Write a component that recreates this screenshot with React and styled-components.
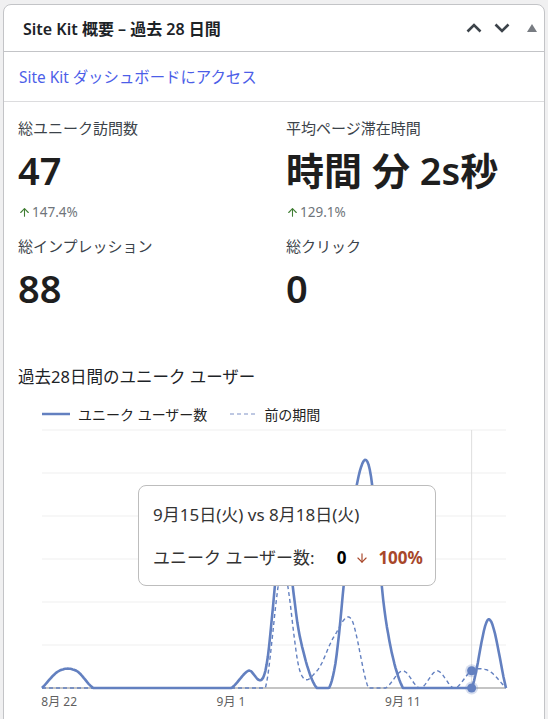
import React from "react";
import styled, { createGlobalStyle } from "styled-components";
import { ArrowUp, ArrowDown } from "lucide-react";

const GlobalStyle = createGlobalStyle`
  html, body {
    margin: 0;
    padding: 0;
    background: #f0f0f1;
  }
  body {
    font-family: "Noto Sans", "Noto Sans CJK JP", sans-serif;
    color: #1d2327;
  }
  * {
    box-sizing: border-box;
  }
`;

// chart geometry, in page pixels
const X0 = 42;
const STEP = 464 / 27;
const BASE = 688;
const TOP = 430;
const UNIT = (BASE - TOP) / 15;

const current = [0, 1, 1, 0, 0, 0, 0, 0, 0, 0, 0, 0, 1, 1, 9, 3, 0, 1, 10, 13, 4, 0, 0, 0, 0, 0, 4, 0];
const previous = [0, 0, 0, 0, 0, 0, 0, 0, 0, 0, 0, 0, 0, 0, 7, 1, 1, 3, 4, 0, 0, 1, 0, 1, 0, 1, 1, 0];

const xAt = (i) => X0 + i * STEP;
const yAt = (v) => BASE - v * UNIT;

function curvePath(values) {
  const n = values.length;
  const tan = values.map((v, i) => {
    const a = values[Math.max(0, i - 1)];
    const b = values[Math.min(n - 1, i + 1)];
    return (b - a) / (i === 0 || i === n - 1 ? 1 : 2);
  });
  const pts = [];
  for (let i = 0; i < n - 1; i++) {
    for (let s = 0; s < 14; s++) {
      const t = s / 14;
      const t2 = t * t;
      const t3 = t2 * t;
      const v =
        (2 * t3 - 3 * t2 + 1) * values[i] +
        (t3 - 2 * t2 + t) * tan[i] +
        (-2 * t3 + 3 * t2) * values[i + 1] +
        (t3 - t2) * tan[i + 1];
      pts.push([X0 + (i + t) * STEP, yAt(Math.max(0, v))]);
    }
  }
  pts.push([xAt(n - 1), yAt(values[n - 1])]);
  return "M" + pts.map((p) => p[0].toFixed(1) + "," + p[1].toFixed(1)).join("L");
}

const Page = styled.div`
  padding: 4px 3px 0;
`;

const Card = styled.section`
  background: #fff;
  border: 1px solid #c3c4c7;
  border-radius: 8px 8px 0 0;
  padding-bottom: 40px;
`;

const Header = styled.header`
  height: 47px;
  display: flex;
  align-items: center;
  padding: 0 7px 0 19px;
  border-bottom: 1px solid #c3c4c7;
`;

const Title = styled.h2`
  flex: 1;
  margin: 0;
  font-size: 16px;
  font-weight: 600;
  color: #1d2327;
`;

const Handle = styled.button`
  display: flex;
  align-items: center;
  justify-content: center;
  margin-left: ${({ $space }) => $space}px;
  padding: 0;
  border: 0;
  background: none;
  cursor: pointer;
  svg {
    display: block;
  }
`;

const LinkRow = styled.div`
  height: 50px;
  display: flex;
  align-items: center;
  padding-left: 15px;
  border-bottom: 1px solid #dcdcde;
`;

const DashLink = styled.a`
  font-size: 15.4px;
  color: #4c5ee8;
  text-decoration: none;
`;

const Metrics = styled.div`
  display: grid;
  grid-template-columns: 268px 1fr;
  row-gap: 15px;
  padding: 16px 14px 0;
`;

const Metric = styled.div`
  display: flex;
  flex-direction: column;
`;

const MetricLabel = styled.div`
  height: 20px;
  line-height: 20px;
  font-size: 15px;
  color: #3c434a;
`;

const MetricValue = styled.div`
  margin-top: 10px;
  height: 44px;
  line-height: 44px;
  font-size: 38px;
  font-weight: 600;
  color: #1e1e1e;
  white-space: nowrap;
`;

const Change = styled.div`
  margin-top: 11px;
  height: 18px;
  display: flex;
  align-items: center;
  gap: 1px;
  font-size: 13.5px;
  color: #6f757b;
  svg {
    color: #3f7d32;
  }
`;

const ChartSection = styled.div`
  margin-top: 55px;
`;

const ChartTitle = styled.h3`
  margin: 0;
  padding-left: 14px;
  height: 24px;
  line-height: 24px;
  font-size: 16.5px;
  font-weight: 400;
  color: #1d2327;
`;

const Legend = styled.div`
  margin-top: 15px;
  height: 20px;
  display: flex;
  align-items: center;
  padding-left: 38px;
  font-size: 14px;
  color: #222;
`;

const LegendItem = styled.div`
  display: flex;
  align-items: center;
  gap: 8px;
  & + & {
    margin-left: 23px;
  }
  svg {
    display: block;
  }
`;

const ChartWrap = styled.div`
  position: relative;
  height: 300px;
  svg {
    display: block;
  }
`;

const Tooltip = styled.div`
  position: absolute;
  left: 134px;
  top: 61px;
  width: 298px;
  height: 101px;
  padding: 17px 14px 0;
  background: #fff;
  border: 1px solid #bdbdbd;
  border-radius: 8px;
  font-size: 17px;
  color: #333;
`;

const TipLine = styled.div`
  height: 24px;
  line-height: 24px;
  display: flex;
  align-items: center;
  white-space: nowrap;
  & + & {
    margin-top: 19px;
  }
`;

const TipValue = styled.b`
  margin-left: 22px;
  color: #000;
`;

const TipDelta = styled.b`
  display: flex;
  align-items: center;
  gap: 9px;
  margin-left: 9px;
  color: #a8472a;
`;

const ChevronUp = () => (
  <svg width="16" height="10" viewBox="0 0 16 10">
    <polyline points="1.5,8.5 8,2 14.5,8.5" fill="none" stroke="#3c434a" strokeWidth="2.6" />
  </svg>
);

const ChevronDown = () => (
  <svg width="16" height="10" viewBox="0 0 16 10">
    <polyline points="1.5,1.5 8,8 14.5,1.5" fill="none" stroke="#3c434a" strokeWidth="2.6" />
  </svg>
);

const Triangle = () => (
  <svg width="10" height="8" viewBox="0 0 10 8">
    <polygon points="5,0 10,8 0,8" fill="#787c82" />
  </svg>
);

const LINE = "#6380c0";

function UsersChart() {
  const grid = [0, 1, 2, 3, 4, 5].map((k) => TOP + k * 43);
  const labels = [
    { i: 1, text: "8月 22" },
    { i: 11, text: "9月 1" },
    { i: 21, text: "9月 11" },
  ];
  const hover = 25;
  return (
    <ChartWrap>
      <svg width="540" height="300" viewBox="4 424 540 300">
        {grid.map((y) => (
          <line key={y} x1={X0} x2={X0 + 464} y1={y} y2={y} stroke="#efefef" strokeWidth="1" />
        ))}
        <line x1={xAt(hover)} x2={xAt(hover)} y1={TOP} y2={BASE} stroke="#dedede" strokeWidth="1" />
        <line x1={X0} x2={X0 + 464} y1={BASE} y2={BASE} stroke="#8a8a8a" strokeWidth="1.2" />
        <path d={curvePath(current)} fill="none" stroke={LINE} strokeWidth="2.6" strokeLinejoin="round" />
        <path d={curvePath(previous)} fill="none" stroke={LINE} strokeWidth="1.4" strokeDasharray="4 3" />
        {[previous[hover], current[hover]].map((v, k) => (
          <g key={k}>
            <circle cx={xAt(hover)} cy={yAt(v)} r="6.5" fill={LINE} opacity="0.25" />
            <circle cx={xAt(hover)} cy={yAt(v)} r="4.5" fill={LINE} />
          </g>
        ))}
        {labels.map((l) => (
          <text key={l.i} x={xAt(l.i)} y={706} textAnchor="middle" fontSize="12" fill="#5f5f5f">
            {l.text}
          </text>
        ))}
      </svg>
      <Tooltip>
        <TipLine>9月15日(火) vs 8月18日(火)</TipLine>
        <TipLine>
          ユニーク ユーザー数:
          <TipValue>0</TipValue>
          <TipDelta>
            <ArrowDown size={14} strokeWidth={2} />
            100%
          </TipDelta>
        </TipLine>
      </Tooltip>
    </ChartWrap>
  );
}

export default function App() {
  const metrics = [
    { label: "総ユニーク訪問数", value: "47", change: "147.4%" },
    { label: "平均ページ滞在時間", value: "時間 分 2s秒", change: "129.1%" },
    { label: "総インプレッション", value: "88" },
    { label: "総クリック", value: "0" },
  ];
  return (
    <>
      <GlobalStyle />
      <Page>
        <Card>
          <Header>
            <Title>Site Kit 概要 – 過去 28 日間</Title>
            <Handle $space={0} aria-label="上へ移動">
              <ChevronUp />
            </Handle>
            <Handle $space={12} aria-label="下へ移動">
              <ChevronDown />
            </Handle>
            <Handle $space={17} aria-label="パネルを切り替え">
              <Triangle />
            </Handle>
          </Header>
          <LinkRow>
            <DashLink href="#">Site Kit ダッシュボードにアクセス</DashLink>
          </LinkRow>
          <Metrics>
            {metrics.map((m) => (
              <Metric key={m.label}>
                <MetricLabel>{m.label}</MetricLabel>
                <MetricValue>{m.value}</MetricValue>
                {m.change && (
                  <Change>
                    <ArrowUp size={13} strokeWidth={2} />
                    {m.change}
                  </Change>
                )}
              </Metric>
            ))}
          </Metrics>
          <ChartSection>
            <ChartTitle>過去28日間のユニーク ユーザー</ChartTitle>
            <Legend>
              <LegendItem>
                <svg width="28" height="4">
                  <line x1="0" x2="28" y1="2" y2="2" stroke={LINE} strokeWidth="2.5" />
                </svg>
                ユニーク ユーザー数
              </LegendItem>
              <LegendItem>
                <svg width="26" height="4">
                  <line x1="0" x2="26" y1="2" y2="2" stroke="#a9b6d9" strokeWidth="1.5" strokeDasharray="4 3" />
                </svg>
                前の期間
              </LegendItem>
            </Legend>
            <UsersChart />
          </ChartSection>
        </Card>
      </Page>
    </>
  );
}
